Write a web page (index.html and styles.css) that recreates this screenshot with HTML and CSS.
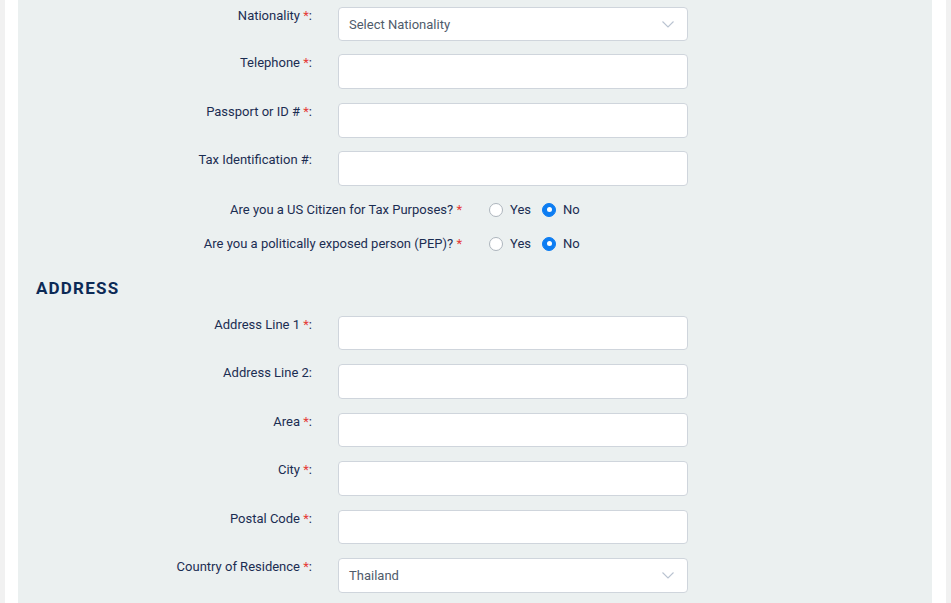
FILE: index.html
```html
<!DOCTYPE html>
<html>
<head>
<meta charset="utf-8">
<link rel="stylesheet" href="styles.css">
</head>
<body>
<div class="page">
  <div class="panel">
    <div class="row row-first">
      <label class="lbl">Nationality <span class="req">*</span>:</label>
      <div class="field select">
        <span class="sel-text">Select Nationality</span>
        <svg class="chev" width="12" height="7" viewBox="0 0 12 7"><path d="M0.5 0.5 L6 6 L11.5 0.5" fill="none" stroke="#b9c3d1" stroke-width="1.1"/></svg>
      </div>
    </div>
    <div class="row">
      <label class="lbl">Telephone <span class="req">*</span>:</label>
      <div class="field"></div>
    </div>
    <div class="row">
      <label class="lbl">Passport or ID # <span class="req">*</span>:</label>
      <div class="field"></div>
    </div>
    <div class="row">
      <label class="lbl">Tax Identification #:</label>
      <div class="field"></div>
    </div>
    <div class="radio-row">
      <span class="rlbl">Are you a US Citizen for Tax Purposes? <span class="req">*</span></span>
      <div class="opts">
        <span class="opt"><span class="dot"></span>Yes</span>
        <span class="opt"><span class="dot on"></span>No</span>
      </div>
    </div>
    <div class="radio-row">
      <span class="rlbl">Are you a politically exposed person (PEP)? <span class="req">*</span></span>
      <div class="opts">
        <span class="opt"><span class="dot"></span>Yes</span>
        <span class="opt"><span class="dot on"></span>No</span>
      </div>
    </div>
    <h2 class="heading">ADDRESS</h2>
    <div class="row addr">
      <label class="lbl">Address Line 1 <span class="req">*</span>:</label>
      <div class="field"></div>
    </div>
    <div class="row addr">
      <label class="lbl">Address Line 2:</label>
      <div class="field"></div>
    </div>
    <div class="row addr">
      <label class="lbl">Area <span class="req">*</span>:</label>
      <div class="field"></div>
    </div>
    <div class="row addr">
      <label class="lbl">City <span class="req">*</span>:</label>
      <div class="field"></div>
    </div>
    <div class="row addr">
      <label class="lbl">Postal Code <span class="req">*</span>:</label>
      <div class="field"></div>
    </div>
    <div class="row addr">
      <label class="lbl">Country of Residence <span class="req">*</span>:</label>
      <div class="field select">
        <span class="sel-text">Thailand</span>
        <svg class="chev" width="12" height="7" viewBox="0 0 12 7"><path d="M0.5 0.5 L6 6 L11.5 0.5" fill="none" stroke="#b9c3d1" stroke-width="1.1"/></svg>
      </div>
    </div>
  </div>
</div>
</body>
</html>
```
FILE: styles.css
```css
html, body {
  margin: 0;
  padding: 0;
  height: 100%;
  overflow: hidden;
}
body {
  background: #f1f1f1;
  font-family: Roboto, "Liberation Sans", Arial, sans-serif;
  font-size: 13px;
  color: #1b2d52;
}
.page {
  margin-left: 5px;
  width: 941px;
  height: 100%;
  background: #ffffff;
  padding: 0 14px 0 13px;
  box-sizing: border-box;
}
.panel {
  background: #ebf0f0;
  height: 100%;
  padding-top: 7px;
  box-sizing: border-box;
}
.row {
  display: flex;
  align-items: flex-start;
  margin-bottom: 13.5px;
}
.row-first {
  margin-bottom: 13px;
}
.row-first .field {
  height: 34px;
}
.addr {
  margin-bottom: 14px;
}
.addr .field {
  height: 34.5px;
}
.lbl {
  width: 294px;
  text-align: right;
  line-height: 17px;
  flex-shrink: 0;
}
.req {
  color: #e53935;
}
.field {
  margin-left: 26px;
  width: 350px;
  height: 35px;
  background: #ffffff;
  border: 1px solid #cfd5dc;
  border-radius: 4px;
  box-sizing: border-box;
  display: flex;
  align-items: center;
  padding: 0 10px;
}
.sel-text {
  flex: 1;
  color: #4f5b6b;
}
.chev {
  margin-right: 3px;
}
.radio-row {
  display: flex;
  align-items: center;
  height: 20px;
  margin-bottom: 14px;
}
.rlbl {
  width: 444px;
  text-align: right;
  flex-shrink: 0;
}
.opts {
  margin-left: 27px;
  display: flex;
  align-items: center;
  gap: 11px;
}
.opt {
  display: flex;
  align-items: center;
  gap: 7px;
}
.dot {
  width: 14px;
  height: 14px;
  border-radius: 50%;
  border: 1px solid #adb5bd;
  background: #ffffff;
  box-sizing: border-box;
  position: relative;
}
.dot.on {
  background: #0d7df2;
  border-color: #0d7df2;
}
.dot.on::after {
  content: "";
  position: absolute;
  left: 3.5px;
  top: 3.5px;
  width: 5px;
  height: 5px;
  border-radius: 50%;
  background: #ffffff;
}
.heading {
  margin: 24px 0 18px 18px;
  font-size: 17px;
  line-height: 20px;
  font-weight: 700;
  letter-spacing: 1.2px;
  color: #0c2a56;
}
```
